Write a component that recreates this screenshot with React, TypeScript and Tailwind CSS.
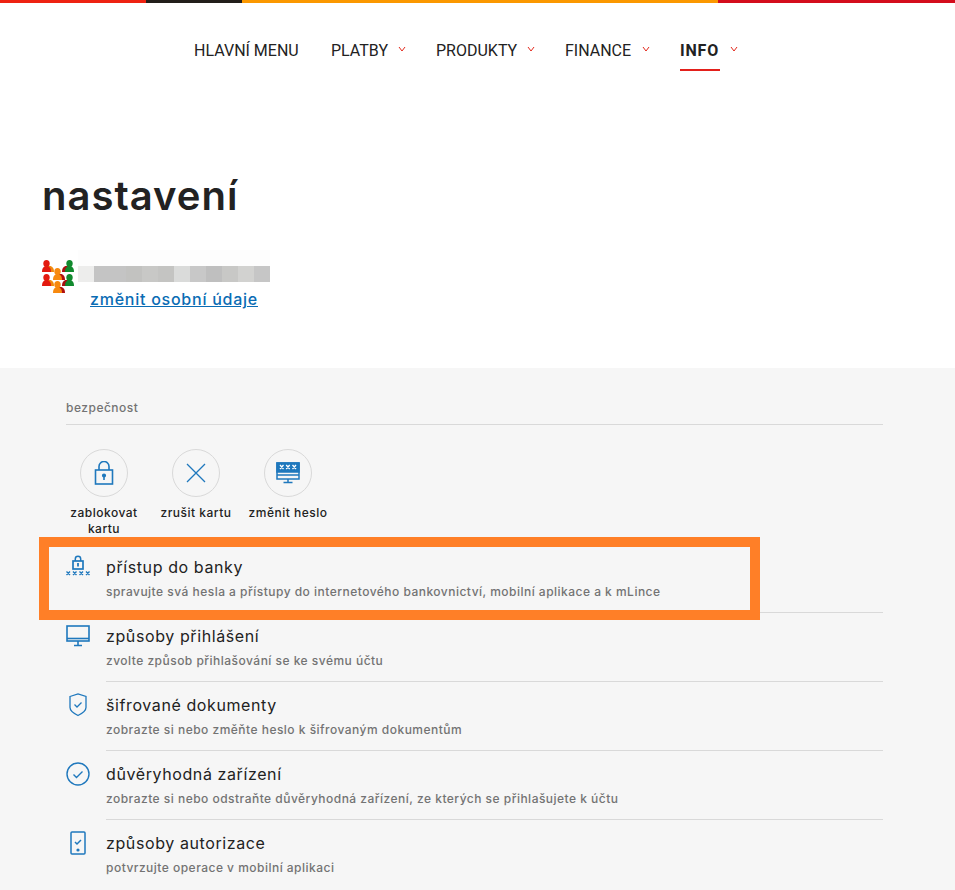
import type { ReactNode } from 'react';

const navItems = [
  { label: 'HLAVNÍ MENU', width: 'w-[107px]', chevron: false, active: false },
  { label: 'PLATBY', width: 'w-[57px]', chevron: true, active: false },
  { label: 'PRODUKTY', width: 'w-[81px]', chevron: true, active: false },
  { label: 'FINANCE', width: 'w-[67px]', chevron: true, active: false },
  { label: 'INFO', width: 'w-[40px]', chevron: true, active: true },
];

const blurBlocks = ['#ededec', '#c4c4c4', '#c4c4c4', '#c2c2c0', '#c8c8c6', '#c4c4c2', '#dadbda', '#c8c8c8', '#bfbfbf', '#c8c8c6', '#d2d2d0', '#c6c6c6'];

const blue = '#1f78bd';

function Chevron() {
  return (
    <svg width="8" height="6" viewBox="0 0 8 6" className="ml-[10px] mt-[-4px]">
      <path d="M1 1l3 4 3-4" fill="none" stroke="#e3281b" strokeWidth="1" />
    </svg>
  );
}

function Person({ x, y, c, d, shift }: { x: number; y: number; c: string; d: string; shift: number }) {
  const body = 'M0 12C0 8.500 1.500 6 4.500 6S9 8.500 9 12z';
  return (
    <g transform={`translate(${x} ${y})`}>
      <path d={body} fill={d} transform={`translate(${shift} 0)`} />
      <ellipse cx="4.500" cy="3.500" rx="3.200" ry="3.500" fill={c} />
      <path d={body} fill={c} />
    </g>
  );
}

function PeopleIcon() {
  return (
    <svg width="34" height="34" viewBox="0 0 34 34" className="shrink-0">
      <Person x={0} y={0} c="#e31a0f" d="#f08a10" shift={3} />
      <Person x={23} y={0} c="#118a2e" d="#a80f10" shift={-3} />
      <Person x={11} y={8} c="#f7890f" d="#b01010" shift={3} />
      <Person x={0} y={14} c="#e31a0f" d="#f08a10" shift={3} />
      <Person x={23} y={14} c="#118a2e" d="#a80f10" shift={-3} />
      <Person x={11} y={21} c="#f7890f" d="#b01010" shift={3} />
    </svg>
  );
}

function LockIcon() {
  return (
    <svg width="20" height="24" viewBox="0 0 20 24" fill="none" stroke={blue} strokeWidth="1.600">
      <rect x="1.500" y="9" width="17" height="14" />
      <path d="M5 9V5.500a5 5 0 0 1 10 0V9" />
      <circle cx="10" cy="14.500" r="1.300" fill={blue} />
      <path d="M10 15v4" />
    </svg>
  );
}

function CrossIcon() {
  return (
    <svg width="20" height="20" viewBox="0 0 20 20" fill="none" stroke={blue} strokeWidth="1.300">
      <path d="M1 1l18 18M19 1L1 19" />
    </svg>
  );
}

function PasswordIcon() {
  return (
    <svg width="24" height="22" viewBox="0 0 24 22" fill="none" stroke={blue} strokeWidth="1.500">
      <rect x="1" y="1" width="22" height="16" />
      <rect x="1" y="1" width="22" height="9" fill={blue} />
      <path d="M1 13h22M12 17v3M7.500 20.500h9" />
      <path d="M4 3l3.500 4M7.500 3L4 7M10.200 3l3.500 4M13.700 3l-3.500 4M16.500 3L20 7M20 3l-3.500 4" stroke="#fff" strokeWidth="1.300" />
    </svg>
  );
}

function BankAccessIcon() {
  return (
    <svg width="24" height="21" viewBox="0 0 24 21" fill="none" stroke={blue}>
      <rect x="7" y="6" width="10" height="8" strokeWidth="1.700" />
      <path d="M9.300 6V4a2.700 2.700 0 0 1 5.400 0v2" strokeWidth="1.500" />
      <path d="M12 8v3.500" strokeWidth="1.800" />
      <path d="M.5 16.500l3.500 3.500M4 16.500L.5 20M7 16.500l3.500 3.500M10.500 16.500L7 20M13.500 16.500L17 20M17 16.500L13.500 20M20 16.500l3.500 3.500M23.500 16.500L20 20" strokeWidth="1.400" />
    </svg>
  );
}

function MonitorIcon() {
  return (
    <svg width="24" height="22" viewBox="0 0 24 22" fill="none" stroke={blue} strokeWidth="1.600" className="mt-[1px]">
      <rect x="1" y="1" width="22" height="15" />
      <path d="M1 13.500h22" />
      <path d="M12 16v4M8 20.500h8" />
    </svg>
  );
}

function ShieldIcon() {
  return (
    <svg width="18" height="24" viewBox="0 0 18 24" fill="none" stroke={blue} strokeWidth="1.300">
      <path d="M1 3.500L9 1l8 2.500v11c0 3-4 6-8 8-4-2-8-5-8-8z" />
      <path d="M5.500 11.500l2.500 2.500 4.500-4.500" />
    </svg>
  );
}

function CheckCircleIcon() {
  return (
    <svg width="24" height="24" viewBox="0 0 24 24" fill="none" stroke={blue} strokeWidth="1.400">
      <circle cx="12" cy="12" r="11" />
      <path d="M7.500 12.500l3 3 6-6" />
    </svg>
  );
}

function PhoneIcon() {
  return (
    <svg width="16" height="24" viewBox="0 0 16 24" fill="none" stroke={blue} strokeWidth="1.500">
      <rect x="1" y="1" width="14" height="22" rx="1" />
      <path d="M5 11l2 2 4-4" />
      <circle cx="8" cy="19" r="1.600" fill={blue} stroke="none" />
    </svg>
  );
}

const securityActions: { icon: ReactNode; label: ReactNode }[] = [
  { icon: <LockIcon />, label: <>zablokovat<br />kartu</> },
  { icon: <CrossIcon />, label: 'zrušit kartu' },
  { icon: <PasswordIcon />, label: 'změnit heslo' },
];

const rows = [
  { icon: <MonitorIcon />, title: 'způsoby přihlášení', text: 'zvolte způsob přihlašování se ke svému účtu' },
  { icon: <ShieldIcon />, title: 'šifrované dokumenty', text: 'zobrazte si nebo změňte heslo k šifrovaným dokumentům' },
  { icon: <CheckCircleIcon />, title: 'důvěryhodná zařízení', text: 'zobrazte si nebo odstraňte důvěryhodná zařízení, ze kterých se přihlašujete k účtu' },
  { icon: <PhoneIcon />, title: 'způsoby autorizace', text: 'potvrzujte operace v mobilní aplikaci' },
];

function Row({ icon, title, text, divider = true }: { icon: ReactNode; title: string; text: string; divider?: boolean }) {
  return (
    <div className="flex h-[69px]">
      <div className="w-[40px] shrink-0 pt-[11px] flex justify-center items-start pr-[16px]">{icon}</div>
      <div className={`flex-1 pt-[11px] ${divider ? 'border-b border-[#d9d9d9]' : ''}`}>
        <div className="text-[16px] leading-[24px] text-[#222] tracking-[0.6px]">{title}</div>
        <div className="mt-[4px] text-[12px] leading-[18px] font-medium text-[#737373] tracking-[0.48px]">{text}</div>
      </div>
    </div>
  );
}

export default function App() {
  return (
    <div className="w-[955px] h-[890px] overflow-hidden bg-white font-['Inter',sans-serif]">
      <div className="flex h-[3px]">
        <div className="w-[146px] bg-[#ee2211]" />
        <div className="w-[96px] bg-[#221e1a]" />
        <div className="w-[476px] bg-[#fb9800]" />
        <div className="flex-1 bg-[#d40d1c]" />
      </div>

      <nav className="flex h-[68px] pl-[194px] gap-[30px] font-['Roboto',sans-serif] text-[16px] text-[#222]">
        {navItems.map((item) => (
          <div key={item.label} className="flex items-center h-[68px] pt-[27px]">
            <span className={`relative block whitespace-nowrap leading-[40px] ${item.width} ${item.active ? 'font-bold tracking-[0.8px]' : ''}`}>
              {item.label}
              {item.active && <span className="absolute left-0 right-0 bottom-0 h-[2px] bg-[#e3201b]" />}
            </span>
            {item.chevron && <Chevron />}
          </div>
        ))}
      </nav>

      <div className="h-[297px] pl-[42px] pt-[100px]">
        <h1 className="text-[40px] leading-[50px] font-semibold text-[#222] tracking-[1px]">nastavení</h1>
        <div className="flex mt-[29px]">
          <div className="pt-[10px] w-[36px]"><PeopleIcon /></div>
          <div>
            <div className="h-[16px] w-[192px] bg-[#fdfdfd]" />
            <div className="flex">
              {blurBlocks.map((c, i) => (
                <div key={i} className="w-[16px] h-[16px]" style={{ backgroundColor: c }} />
              ))}
            </div>
            <a className="block ml-[12px] mt-[5px] text-[16px] leading-[24px] font-medium text-[#0a6cb4] underline tracking-[0.75px]">změnit osobní údaje</a>
          </div>
        </div>
      </div>

      <div className="h-[522px] bg-[#f6f6f6] px-[66px]">
        <div className="w-[817px]">
          <div className="h-[57px] pt-[31px] border-b border-[#d9d9d9] text-[12px] leading-[18px] font-medium text-[#737373] tracking-[0.5px]">bezpečnost</div>
          <div className="flex h-[119px] pt-[24px] -ml-[8px]">
            {securityActions.map((action, i) => (
              <div key={i} className="w-[92px] flex flex-col items-center">
                <div className="w-[48px] h-[48px] rounded-full border border-[#d9d9d9] flex items-center justify-center">{action.icon}</div>
                <div className="mt-[8px] text-[12px] leading-[16px] font-medium text-[#222] text-center tracking-[0.5px] whitespace-nowrap">{action.label}</div>
              </div>
            ))}
          </div>
          <div className="relative">
            <div className="absolute left-[-27px] top-[-7px] w-[721px] h-[83px] border-[10px] border-[#ff7f27] pointer-events-none" />
            <Row icon={<BankAccessIcon />} title="přístup do banky" text="spravujte svá hesla a přístupy do internetového bankovnictví, mobilní aplikace a k mLince" />
          </div>
          {rows.map((row, i) => (
            <Row key={row.title} {...row} divider={i < rows.length - 1} />
          ))}
        </div>
      </div>
    </div>
  );
}
